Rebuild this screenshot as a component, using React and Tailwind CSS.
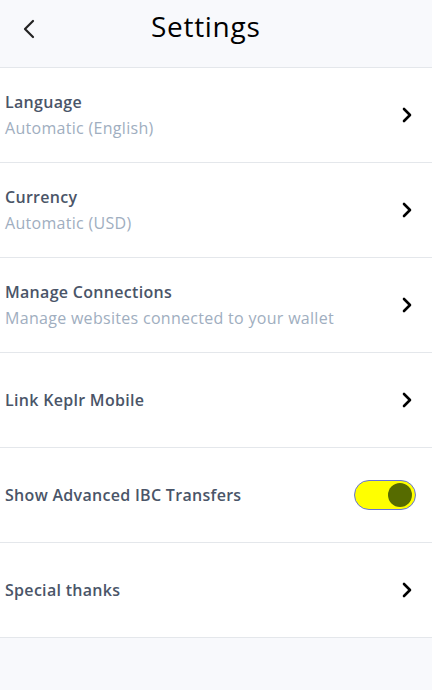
import { useState } from "react";

function Chevron() {
    return (
        <svg width="12" height="18" viewBox="0 0 12 18" fill="none">
            <path d="M3 3l6 6-6 6" stroke="#000" strokeWidth="2.6" strokeLinecap="round" strokeLinejoin="round" />
        </svg>
    );
}

function Row({ title, sub, children }) {
    return (
        <div className="h-[95px] flex items-center justify-between pl-[5px] pr-[19px] border-b border-[#e4e7eb] bg-white">
            <div className="flex flex-col tracking-[0.3px]">
                <span className="text-[16px] font-semibold text-[#4a5568] leading-[22px]">{title}</span>
                {sub && (
                    <span className="text-[16px] text-[#a0aec0] leading-[22px] mt-[4px]">{sub}</span>
                )}
            </div>
            {children || <Chevron />}
        </div>
    );
}

export default function App() {
    const [ibc, setIbc] = useState(true);

    return (
        <div className="w-[432px] h-[690px] bg-[#f8f9fc] font-['Open_Sans',sans-serif]">
            {/* header */}
            <div className="h-[68px] flex items-center border-b border-[#e4e7eb] relative">
                <button className="ml-[20px] w-[20px] h-[24px] mt-[-10px] flex items-center justify-center">
                    <svg width="16" height="22" viewBox="0 0 16 22" fill="none">
                        <path d="M11 3L3 11l8 8" stroke="#222" strokeWidth="2.2" strokeLinecap="round" strokeLinejoin="round" />
                    </svg>
                </button>
                <h1 className="absolute left-[151px] top-[6px] text-[28px] leading-[40px] tracking-[0.7px] text-black font-normal">Settings</h1>
            </div>

            <Row title="Language" sub="Automatic (English)" />
            <Row title="Currency" sub="Automatic (USD)" />
            <Row title="Manage Connections" sub="Manage websites connected to your wallet" />
            <Row title="Link Keplr Mobile" />
            <Row title="Show Advanced IBC Transfers">
                <button
                    onClick={() => setIbc((p) => !p)}
                    className="w-[62px] h-[30px] rounded-full bg-[#ffff00] border border-[#6674d8] flex items-center px-[3px] mr-[-3px]"
                >
                    <span className={`w-[24px] h-[24px] rounded-full bg-[#566b00] ${ibc ? "ml-auto" : ""}`} />
                </button>
            </Row>
            <Row title="Special thanks" />
        </div>
    );
}
